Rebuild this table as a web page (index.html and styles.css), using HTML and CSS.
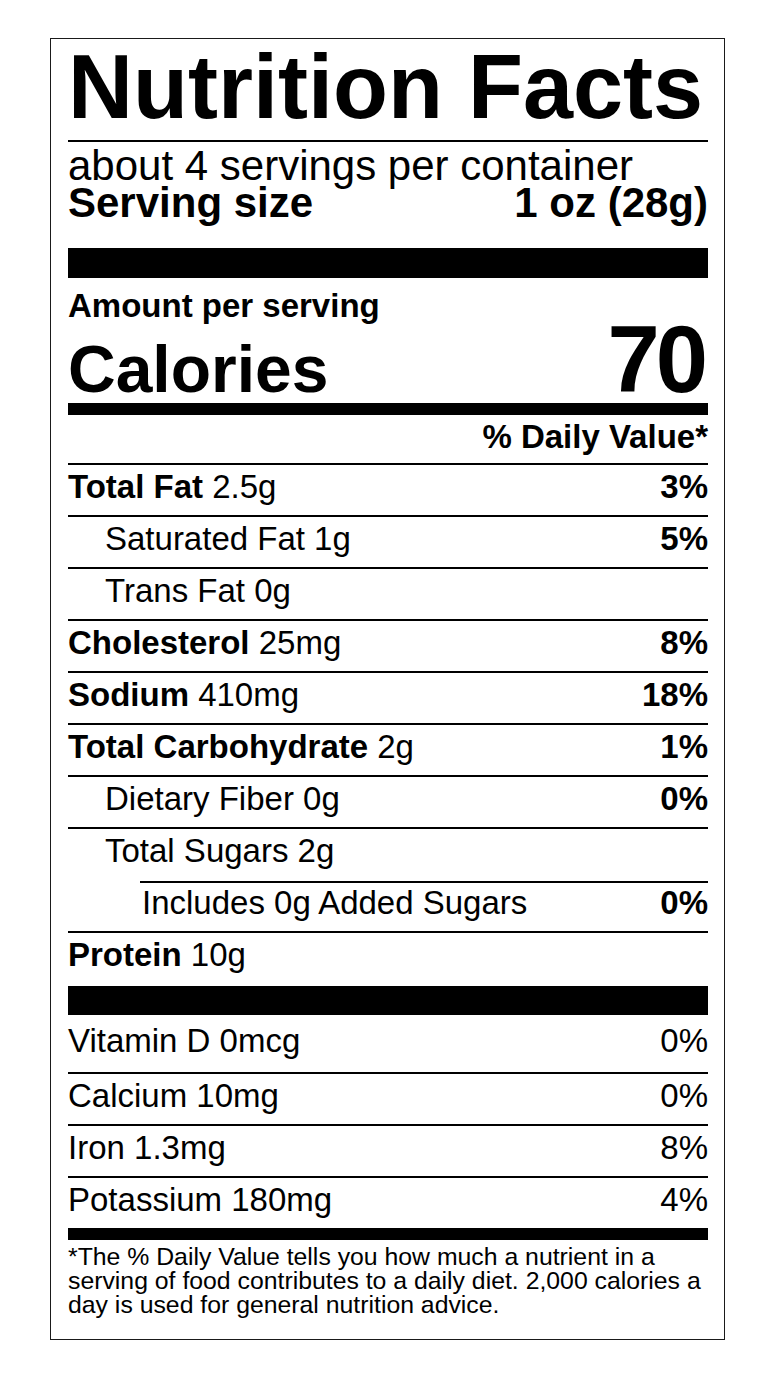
FILE: index.html
```html
<!DOCTYPE html>
<html lang="en">
<head>
<meta charset="utf-8">
<title>Nutrition Facts</title>
<link rel="stylesheet" href="styles.css">
</head>
<body>
<section class="label">
  <h1 class="title">Nutrition Facts</h1>
  <div class="servings">about 4 servings per container</div>
  <div class="serving-size"><span>Serving size</span><span>1 oz (28g)</span></div>
  <div class="bar bar-thick"></div>
  <div class="amount">Amount per serving</div>
  <div class="calories"><span class="cal-label">Calories</span><span class="cal-value">70</span></div>
  <div class="bar bar-med"></div>
  <div class="dv-head">% Daily Value*</div>

  <div class="row"><span><b>Total Fat</b> 2.5g</span><b>3%</b></div>
  <div class="row indent1"><span>Saturated Fat 1g</span><b>5%</b></div>
  <div class="row indent1"><span>Trans Fat 0g</span></div>
  <div class="row"><span><b>Cholesterol</b> 25mg</span><b>8%</b></div>
  <div class="row"><span><b>Sodium</b> 410mg</span><b>18%</b></div>
  <div class="row"><span><b>Total Carbohydrate</b> 2g</span><b>1%</b></div>
  <div class="row indent1"><span>Dietary Fiber 0g</span><b>0%</b></div>
  <div class="row indent1 short-rule"><span>Total Sugars 2g</span></div>
  <div class="row indent2"><span>Includes 0g Added Sugars</span><b>0%</b></div>
  <div class="row last"><span><b>Protein</b> 10g</span></div>
  <div class="bar bar-thick2"></div>

  <div class="row vit first"><span>Vitamin D 0mcg</span><span>0%</span></div>
  <div class="row vit"><span>Calcium 10mg</span><span>0%</span></div>
  <div class="row vit"><span>Iron 1.3mg</span><span>8%</span></div>
  <div class="row vit last"><span>Potassium 180mg</span><span>4%</span></div>
  <div class="bar bar-med"></div>

  <p class="footnote">*The % Daily Value tells you how much a nutrient in a serving of food contributes to a daily diet. 2,000 calories a day is used for general nutrition advice.</p>
</section>
</body>
</html>
```

FILE: styles.css
```css
html, body {
  margin: 0;
  padding: 0;
  background: #fff;
}

body {
  padding: 38px 0 0 50px;
  font-family: "Liberation Sans", Arial, Helvetica, sans-serif;
  color: #000;
}

.label {
  box-sizing: border-box;
  width: 675px;
  border: 1px solid #1a1a1a;
  padding: 0 16px 22px 17px;
}

.title {
  margin: 0;
  font-size: 90px;
  font-weight: 700;
  line-height: 96px;
  padding-bottom: 5px;
  border-bottom: 2px solid #000;
  white-space: nowrap;
}

.servings {
  font-size: 42px;
  line-height: 38px;
  padding-top: 5px;
}

.serving-size {
  display: flex;
  justify-content: space-between;
  font-size: 42px;
  font-weight: 700;
  line-height: 36px;
}

.bar {
  background: #000;
}

.bar-thick {
  height: 30px;
  margin-top: 27px;
}

.bar-thick2 {
  height: 29px;
}

.bar-med {
  height: 12px;
}

.amount {
  font-size: 33px;
  font-weight: 700;
  line-height: 36px;
  padding-top: 10px;
}

.calories {
  display: flex;
  justify-content: space-between;
  align-items: baseline;
  font-weight: 700;
  line-height: 72px;
  height: 72px;
  margin-bottom: 7px;
}

.cal-label {
  font-size: 66px;
}

.cal-value {
  font-size: 94px;
  letter-spacing: -4px;
  padding-right: 4px;
}

.dv-head {
  font-size: 33px;
  font-weight: 700;
  line-height: 36px;
  text-align: right;
  padding: 4px 0 8px;
  border-bottom: 2px solid #000;
}

.row {
  display: flex;
  justify-content: space-between;
  font-size: 33px;
  line-height: 44px;
  height: 44px;
  padding-bottom: 6px;
  border-bottom: 2px solid #000;
  white-space: nowrap;
}

.row b {
  font-weight: 700;
}

.indent1 {
  padding-left: 37px;
}

.indent2 {
  position: relative;
  padding-left: 74px;
}

.indent2::before {
  content: "";
  position: absolute;
  left: 72px;
  right: 0;
  top: 0;
  height: 2px;
  background: #000;
}

.short-rule {
  border-bottom: none;
  padding-bottom: 8px;
}

.row.last {
  border-bottom: none;
  padding-bottom: 9px;
}

.row.vit.first {
  padding-top: 4px;
  padding-bottom: 9px;
}

.row.vit.last {
  padding-bottom: 6px;
}

.footnote {
  margin: 0;
  padding-top: 5px;
  font-size: 24.8px;
  line-height: 24px;
}
```
